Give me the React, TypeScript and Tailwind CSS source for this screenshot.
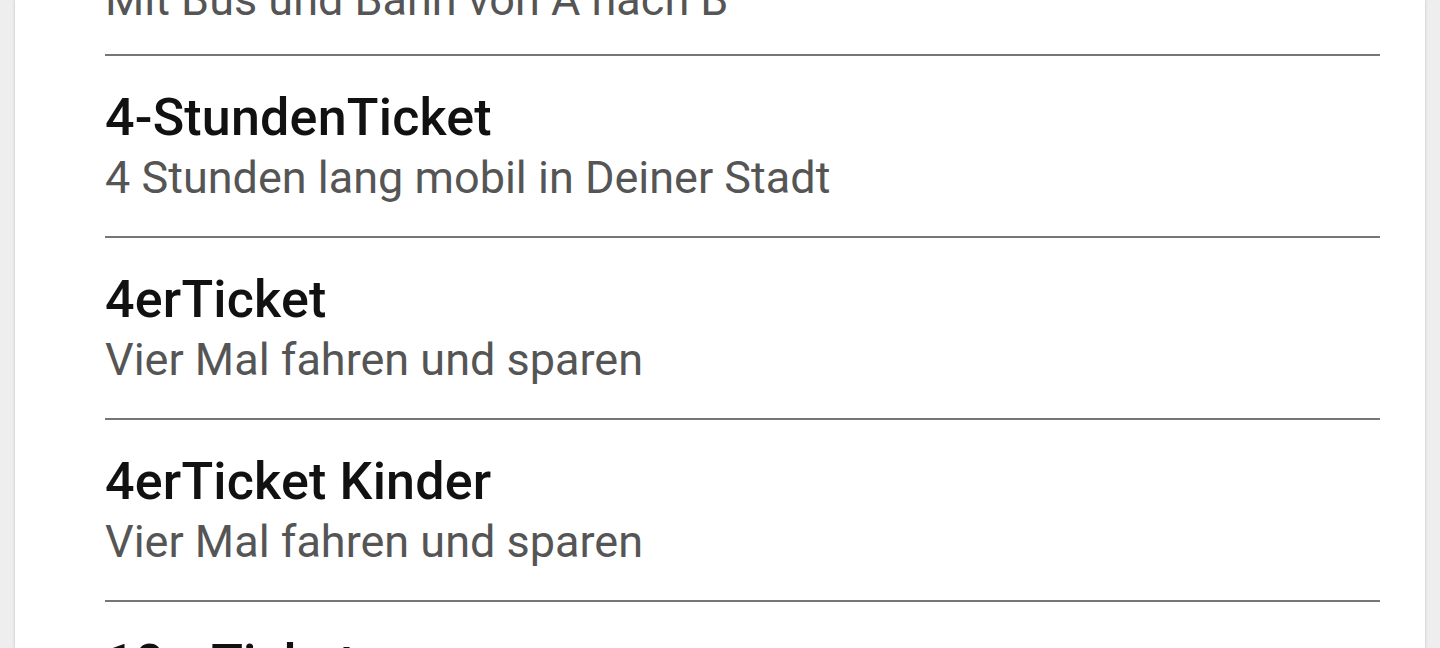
const tickets = [
  { title: '4-StundenTicket', subtitle: '4 Stunden lang mobil in Deiner Stadt' },
  { title: '4erTicket', subtitle: 'Vier Mal fahren und sparen' },
  { title: '4erTicket Kinder', subtitle: 'Vier Mal fahren und sparen' },
  { title: '10erTicket', subtitle: 'Zehn Mal fahren und noch mehr sparen' },
];

const Divider = () => <div className="h-[2px] bg-[#767676]" />;

export default function App() {
  return (
    <div
      className="h-[648px] w-[1440px] overflow-hidden bg-[#eeeeee] px-[15px]"
      style={{ fontFamily: 'Roboto, "Noto Sans", sans-serif' }}
    >
      <div className="flex h-full flex-col overflow-hidden bg-white pl-[90px] pr-[45px] shadow-[0_0_3px_rgba(0,0,0,0.2)]">
        {/* tail of the previous entry, scrolled mostly out of view */}
        <div className="-mt-[28px] pb-[26px] text-[45px] leading-[56px] text-[#555555]">
          Mit Bus und Bahn von A nach B
        </div>
        {tickets.map((t) => (
          <div key={t.title} className="shrink-0">
            <Divider />
            <div className="pt-[30px] pb-[30px]">
              <div className="text-[52px] font-medium leading-[64px] tracking-[0.2px] text-[#111111]">
                {t.title}
              </div>
              <div className="text-[45px] leading-[56px] text-[#555555]">{t.subtitle}</div>
            </div>
          </div>
        ))}
      </div>
    </div>
  );
}
